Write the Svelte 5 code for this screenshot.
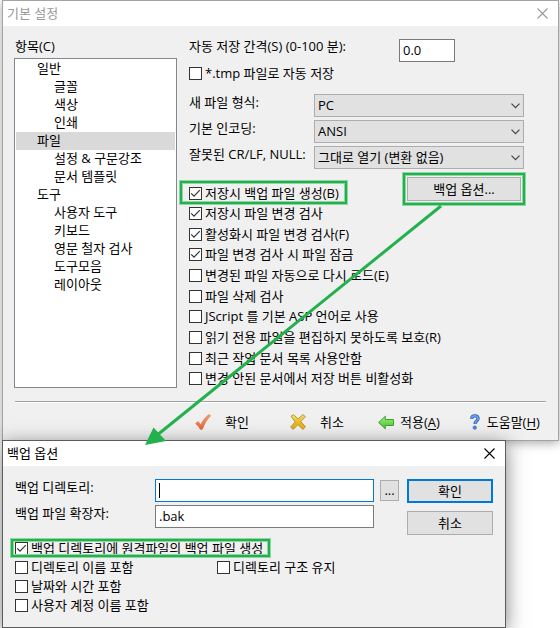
<script>
  const tree = [
    { name: '일반', items: ['글꼴', '색상', '인쇄'] },
    { name: '파일', items: ['설정 & 구문강조', '문서 템플릿'] },
    { name: '도구', items: ['사용자 도구', '키보드', '영문 철자 검사', '도구모음', '레이아웃'] }
  ];
  let selected = $state('파일');

  const combos = [
    { id: 'format', label: '새 파일 형식:', value: 'PC' },
    { id: 'encoding', label: '기본 인코딩:', value: 'ANSI' },
    { id: 'invalid', label: '잘못된 CR/LF, NULL:', value: '그대로 열기 (변환 없음)' }
  ];

  let options = $state([
    { label: '저장시 파일 변경 검사', on: true },
    { label: '활성화시 파일 변경 검사(F)', on: true },
    { label: '파일 변경 검사 시 파일 잠금', on: true },
    { label: '변경된 파일 자동으로 다시 로드(E)', on: false },
    { label: '파일 삭제 검사', on: false },
    { label: 'JScript 를 기본 ASP 언어로 사용', on: false },
    { label: '읽기 전용 파일을 편집하지 못하도록 보호(R)', on: false },
    { label: '최근 작업 문서 목록 사용안함', on: false },
    { label: '변경 안된 문서에서 저장 버튼 비활성화', on: false }
  ]);
  let autosave = $state(false);
  let makeBackup = $state(true);
  let remoteBackup = $state(true);
</script>

{#snippet closeIcon()}
  <svg width="11" height="11" viewBox="0 0 11 11" aria-hidden="true">
    <path d="M.5.5l10 10M10.5.5l-10 10" fill="none" stroke="currentColor" stroke-width="1.1" />
  </svg>
{/snippet}

{#snippet treeRow(name, level)}
  <button class="node" class:child={level === 2} class:selected={selected === name} onclick={() => (selected = name)}>{name}</button>
{/snippet}

<main class="desktop">
  <section class="window prefs" aria-label="기본 설정">
    <header class="titlebar inactive">
      <h1>기본 설정</h1>
      <button class="close" aria-label="닫기">{@render closeIcon()}</button>
    </header>

    <div class="prefs-body">
      <nav class="categories" aria-label="항목">
        <span>항목(C)</span>
        <ul class="tree">
          {#each tree as group}
            <li>
              {@render treeRow(group.name, 1)}
              <ul>
                {#each group.items as item}
                  <li>{@render treeRow(item, 2)}</li>
                {/each}
              </ul>
            </li>
          {/each}
        </ul>
      </nav>

      <div class="settings">
        <div class="interval">
          <label for="interval">자동 저장 간격(S) (0-100 분):</label>
          <input id="interval" class="text" type="text" value="0.0" />
        </div>
        <label class="check"><input type="checkbox" bind:checked={autosave} />*.tmp 파일로 자동 저장</label>

        <div class="combos">
          {#each combos as c}
            <label for={c.id}>{c.label}</label>
            <div class="combo">
              <select id={c.id}><option>{c.value}</option></select>
              <svg width="9" height="6" viewBox="0 0 9 6" aria-hidden="true">
                <path d="M.5.7l4 4 4-4" fill="none" stroke="#444" stroke-width="1.2" />
              </svg>
            </div>
          {/each}
        </div>

        <div class="options">
          <div class="backup-row">
            <label class="check marked wide"><input type="checkbox" bind:checked={makeBackup} />저장시 백업 파일 생성(B)</label>
            <span class="marked square"><button class="push">백업 옵션...</button></span>
          </div>
          {#each options as o}
            <label class="check"><input type="checkbox" bind:checked={o.on} />{o.label}</label>
          {/each}
        </div>
      </div>
    </div>

    <footer class="actions">
      <button>
        <svg width="16" height="16" viewBox="0 0 16 16" aria-hidden="true">
          <defs><linearGradient id="okFill" x2="0" y2="1"><stop offset="0" stop-color="#f7a27e" /><stop offset="1" stop-color="#e8622f" /></linearGradient></defs>
          <path d="M.6 9.6l2.6-2 2.6 3.3C7.500 6.900 10.300 3.300 14 .6l1.500 1.100C12 5.300 9.500 9.500 7.400 15.200l-2 .2C4.200 13.200 2.600 11.300.6 9.600z" fill="url(#okFill)" stroke="#dc7650" stroke-width=".7" />
        </svg>
        <span>확인</span>
      </button>
      <button>
        <svg width="16" height="16" viewBox="0 0 16 16" aria-hidden="true">
          <defs><linearGradient id="noFill" x2="0" y2="1"><stop offset="0" stop-color="#f5df6c" /><stop offset=".55" stop-color="#f0b820" /><stop offset="1" stop-color="#eda80c" /></linearGradient></defs>
          <path d="M1 2.200L3.500.6l4.600 4.300L12.800.6l2.600 2-4.600 5 4.700 5.200-2.600 2.600-5-4.700-4.700 4.700-2.600-2.300L5.200 7.900z" fill="url(#noFill)" stroke="#9f8a3a" stroke-width=".8" stroke-linejoin="round" />
        </svg>
        <span>취소</span>
      </button>
      <button>
        <svg width="16" height="16" viewBox="0 0 16 16" aria-hidden="true">
          <defs><linearGradient id="goFill" x2="0" y2="1"><stop offset="0" stop-color="#a6ef80" /><stop offset="1" stop-color="#3fc426" /></linearGradient></defs>
          <path d="M.6 8.500L7.300 2.200v3.300h8.200v6H7.300v3.300z" fill="url(#goFill)" stroke="#37992a" stroke-width=".9" stroke-linejoin="round" />
        </svg>
        <span>적용(<u>A</u>)</span>
      </button>
      <button>
        <svg width="16" height="16" viewBox="0 0 16 16" aria-hidden="true">
          <path d="M4.700 4.800C4.800 2.700 6 1.800 7.900 1.800c2 0 3.400 1 3.400 2.700 0 2.400-3.200 2.700-3.200 5.600" fill="none" stroke="#2c5fb4" stroke-width="3.200" />
          <path d="M4.700 4.400C4.800 2.700 6 1.800 7.900 1.800c2 0 3.400 1 3.400 2.700 0 2.400-3.200 2.700-3.200 5.200" fill="none" stroke="#6c9df0" stroke-width="1.800" />
          <circle cx="7.900" cy="13.700" r="1.700" fill="#5589e4" stroke="#2c5fb4" stroke-width=".7" />
        </svg>
        <span>도움말(<u>H</u>)</span>
      </button>
    </footer>
  </section>

  <section class="window backup" aria-label="백업 옵션">
    <header class="titlebar">
      <h2>백업 옵션</h2>
      <button class="close" aria-label="닫기">{@render closeIcon()}</button>
    </header>

    <div class="backup-body">
      <div class="backup-main">
        <div class="fields">
          <label for="dir">백업 디렉토리:</label>
          <div class="dir"><input id="dir" class="text focused" type="text" value="" /><i class="caret"></i></div>
          <button class="push browse" aria-label="찾아보기">...</button>
          <label for="ext">백업 파일 확장자:</label>
          <input id="ext" class="text" type="text" value=".bak" />
        </div>
        <div class="flags">
          <label class="check marked tight"><input type="checkbox" bind:checked={remoteBackup} />백업 디렉토리에 원격파일의 백업 파일 생성</label>
          <div class="pair">
            <label class="check"><input type="checkbox" />디렉토리 이름 포함</label>
            <label class="check"><input type="checkbox" />디렉토리 구조 유지</label>
          </div>
          <label class="check"><input type="checkbox" />날짜와 시간 포함</label>
          <label class="check"><input type="checkbox" />사용자 계정 이름 포함</label>
        </div>
      </div>
      <div class="dialog-buttons">
        <button class="push default">확인</button>
        <button class="push">취소</button>
      </div>
    </div>
  </section>

  <svg class="pointer" width="560" height="628" viewBox="0 0 560 628" aria-hidden="true">
    <path d="M441 206L156 436" stroke="#22b14c" stroke-width="3" />
    <path d="M145 445l8.500-17.500 12.500 13.500z" fill="#22b14c" />
  </svg>
</main>

<style>
  :global(body) {
    margin: 0;
    background: #fff;
  }
  .desktop {
    position: relative;
    box-sizing: border-box;
    padding: 0 1px 0 2px;
    overflow: hidden;
    font: 13px/14px 'Open Sans', 'Noto Sans CJK KR', sans-serif;
    color: #000;
  }
  .desktop :is(button, input, select) {
    box-sizing: border-box;
    margin: 0;
    font: inherit;
    color: inherit;
    border-radius: 0;
  }
  .window {
    box-sizing: border-box;
    background: #f0f0f0;
    border: 1px solid #a3a3a3;
  }
  .prefs {
    box-shadow: 0 2px 10px rgba(0, 0, 0, 0.35);
  }
  .backup {
    position: relative;
    width: 90.5%;
    margin-top: -1px;
    border-color: #5c5c5c;
    box-shadow: 0 4px 18px rgba(0, 0, 0, 0.5);
  }

  .titlebar {
    display: flex;
    justify-content: space-between;
    align-items: center;
    box-sizing: border-box;
    height: 25px;
    padding: 0 10px 1px 4px;
    background: #fff;
  }
  .inactive {
    color: #999;
  }
  h1,
  h2 {
    margin: 0;
    font-size: 13px;
    font-weight: 400;
  }
  .close {
    display: flex;
    padding: 0;
    border: 0;
    background: none;
  }

  .prefs-body {
    display: grid;
    grid-template-columns: 163px 1fr;
    gap: 12px;
    padding: 13px 34px 13px 11px;
  }
  .categories {
    display: flex;
    flex-direction: column;
    gap: 5px;
  }
  .categories > span {
    padding-left: 1px;
  }
  ul {
    margin: 0;
    padding: 0;
    list-style: none;
  }
  .tree {
    box-sizing: border-box;
    min-height: 330px;
    padding: 1px;
    background: #fff;
    border: 1px solid #828790;
  }
  .node {
    display: block;
    width: 100%;
    height: 18px;
    padding: 0 0 2px 21px;
    border: 0;
    background: none;
    text-align: left;
  }
  .child {
    padding-left: 38px;
  }
  .selected {
    background: #d9d9d9;
  }

  .settings {
    display: flex;
    flex-direction: column;
  }
  .interval {
    display: grid;
    grid-template-columns: 210px 56px;
    align-items: start;
    margin-bottom: 4px;
  }
  .text {
    width: 100%;
    height: 23px;
    padding: 0 3px 2px;
    background: #fff;
    border: 1px solid #7a7a7a;
    outline: 0;
  }
  .dir .focused {
    border-color: #0078d7;
  }
  .combos {
    display: grid;
    grid-template-columns: 125px 1fr;
    gap: 3px 0;
    margin: 14px 0 8px;
  }
  .combos > label {
    padding-top: 1px;
  }
  .combo {
    position: relative;
    display: flex;
  }
  .combo svg {
    position: absolute;
    right: 4px;
    top: 9px;
    pointer-events: none;
  }
  select {
    appearance: none;
    width: 100%;
    height: 23px;
    padding: 0 16px 1px 3px;
    background: #e1e1e1;
    border: 1px solid #adadad;
  }

  .check {
    display: flex;
    align-items: center;
    align-self: flex-start;
    gap: 3px;
    height: 14px;
    line-height: 13px;
    white-space: nowrap;
  }
  .check input {
    appearance: none;
    flex: none;
    width: 13px;
    height: 13px;
    background: #fff;
    border: 1px solid #333;
  }
  .check input:checked {
    background: #fff
      url("data:image/svg+xml,%3Csvg xmlns='http://www.w3.org/2000/svg' viewBox='0 0 11 11'%3E%3Cpath d='M1.200 5.300l2.800 2.900 5.800-6' fill='none' stroke='%23333' stroke-width='1.200'/%3E%3C/svg%3E");
  }
  .options {
    display: flex;
    flex: 1;
    flex-direction: column;
    justify-content: space-between;
    padding-bottom: 2px;
  }
  .backup-row {
    display: flex;
    justify-content: space-between;
    align-items: flex-end;
    height: 23px;
    padding-right: 3px;
  }
  .backup-row .check {
    align-self: flex-end;
  }
  .push {
    display: block;
    width: 100%;
    height: 24px;
    padding: 0 0 1px;
    background: #e1e1e1;
    border: 1px solid #adadad;
  }
  .default {
    border: 2px solid #0078d7;
  }
  .square {
    align-self: flex-start;
    width: 114px;
  }

  .marked {
    position: relative;
  }
  .marked::after {
    content: '';
    position: absolute;
    border: 2px solid #22b14c;
    box-shadow: 0 0 0 1px #8ed6a3, inset 0 0 0 1px #8ed6a3;
    pointer-events: none;
  }
  .wide::after {
    inset: -5px -8px -4px -9px;
  }
  .square::after {
    inset: -4px;
  }
  .tight::after {
    inset: -2px -7px -2px -4px;
  }

  .actions {
    display: grid;
    grid-template-columns: 95px 88px 89px 72px;
    justify-content: end;
    margin: 0 12px;
    padding: 10px 7px 8px 0;
    border-top: 1px solid #a0a0a0;
    box-shadow: inset 0 1px #fff;
  }
  .actions button {
    display: flex;
    align-items: center;
    gap: 4px;
    height: 20px;
    padding: 0;
    border: 0;
    background: none;
    white-space: nowrap;
  }
  .actions span {
    min-width: 44px;
    text-align: center;
  }
  u {
    text-underline-offset: 2px;
  }

  .backup-body {
    display: flex;
    gap: 8px;
    padding: 13px 12px 15px;
  }
  .backup-main {
    flex: 1;
  }
  .fields {
    display: grid;
    grid-template-columns: 140px 1fr 19px;
    gap: 3px 0;
  }
  .fields > label {
    padding-top: 1px;
  }
  .fields .text {
    width: calc(100% - 6px);
  }
  .dir {
    position: relative;
    display: flex;
  }
  .caret {
    position: absolute;
    left: 4px;
    top: 4px;
    width: 1px;
    height: 15px;
    background: #000;
  }
  .browse {
    height: 21px;
    align-self: center;
  }
  .flags {
    display: flex;
    flex-direction: column;
    gap: 5px;
    margin-top: 13px;
  }
  .pair {
    display: grid;
    grid-template-columns: 202px 1fr;
  }
  .dialog-buttons {
    display: flex;
    flex-direction: column;
    gap: 8px;
    width: 86px;
  }
  .pointer {
    position: absolute;
    left: 0;
    top: 0;
    pointer-events: none;
  }
</style>
